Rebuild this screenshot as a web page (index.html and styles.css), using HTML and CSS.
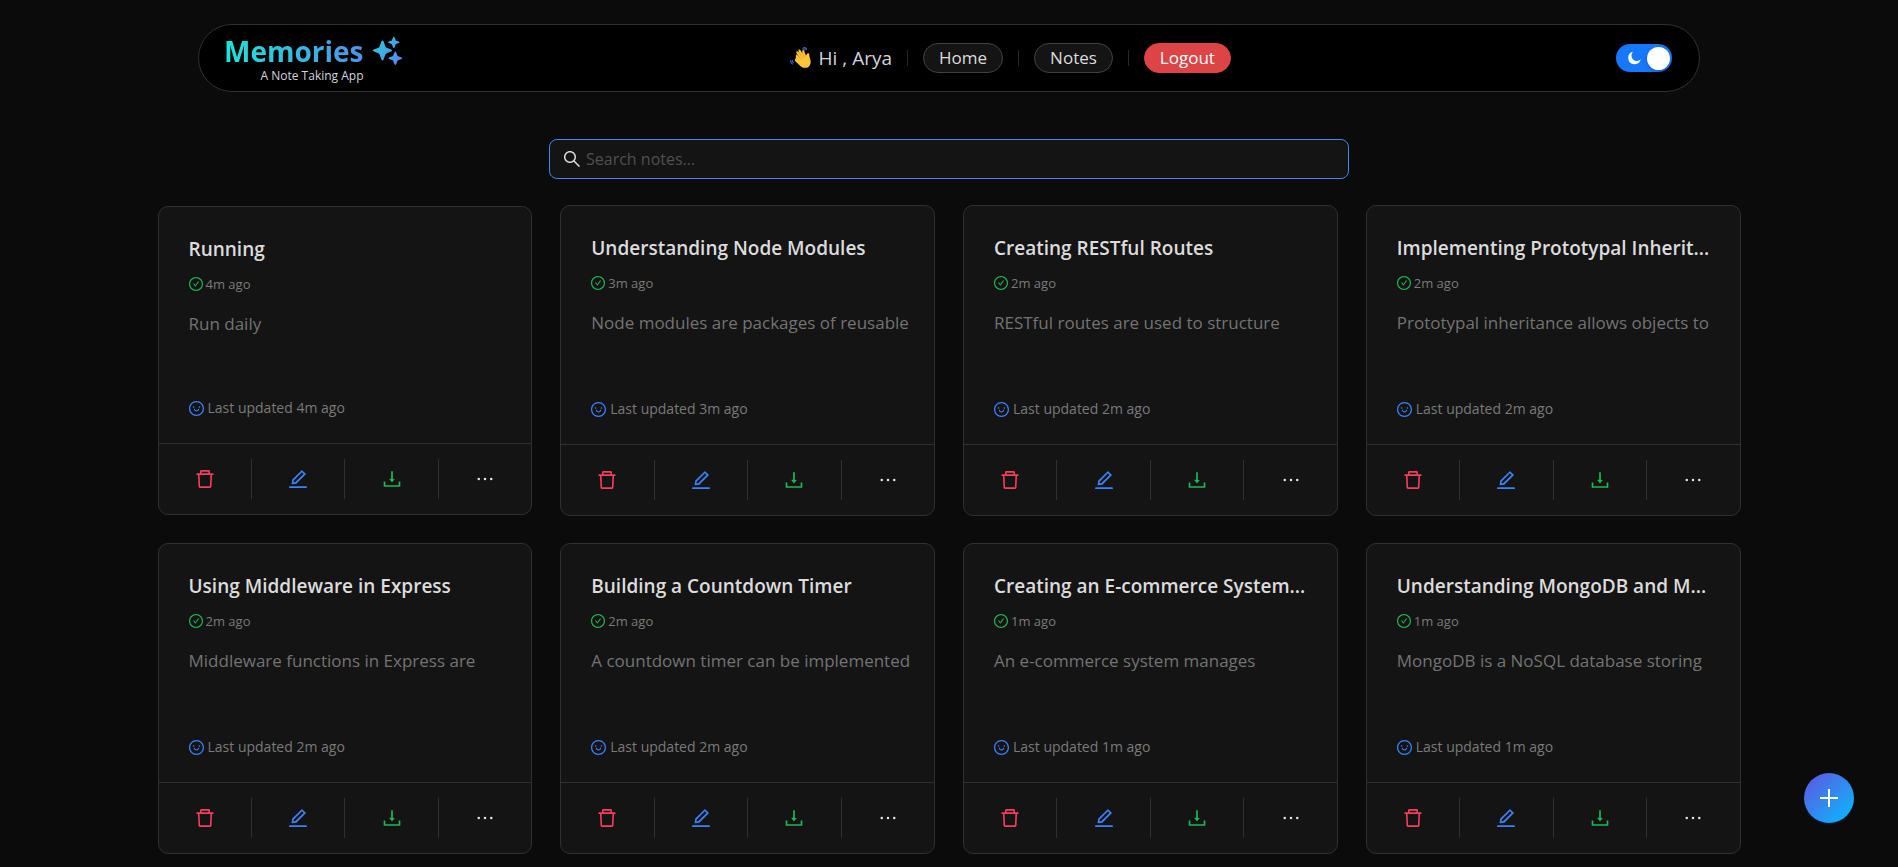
FILE: index.html
```
<!DOCTYPE html>
<html lang="en">
<head>
<meta charset="utf-8">
<meta name="viewport" content="width=device-width, initial-scale=1">
<title>Memories</title>
<link rel="stylesheet" href="styles.css">
</head>
<body>
<svg class="sprite" aria-hidden="true">
  <symbol id="i-trash" viewBox="64 64 896 896"><path d="M360 184h-8c4.400 0 8-3.600 8-8v8h304v-8c0 4.400 3.600 8 8 8h-8v72h72v-80c0-35.300-28.700-64-64-64H352c-35.300 0-64 28.700-64 64v80h72v-72zm504 72H160c-17.700 0-32 14.300-32 32v32c0 4.400 3.600 8 8 8h60.400l24.700 523c1.600 34.100 29.800 61 63.900 61h454c34.200 0 62.300-26.800 63.900-61l24.700-523H888c4.400 0 8-3.600 8-8v-32c0-17.700-14.300-32-32-32zM731.300 840H292.700l-24.200-512h487l-24.200 512z"/></symbol>
  <symbol id="i-edit" viewBox="64 64 896 896"><path d="M257.700 752c2 0 4-.2 6-.5L431.900 722c2-.4 3.900-1.300 5.300-2.800l423.900-423.900a9.960 9.960 0 000-14.100L694.900 114.900c-1.900-1.900-4.400-2.900-7.100-2.900s-5.200 1-7.100 2.900L256.800 538.800c-1.500 1.500-2.400 3.300-2.800 5.300l-29.500 168.200a33.500 33.500 0 009.400 29.800c6.600 6.400 14.900 9.900 23.800 9.900zm67.400-174.400L687.800 215l73.300 73.300-362.700 362.600-88.900 15.700 15.600-89zM880 836H144c-17.700 0-32 14.300-32 32v36c0 4.400 3.600 8 8 8h784c4.400 0 8-3.600 8-8v-36c0-17.700-14.300-32-32-32z"/></symbol>
  <symbol id="i-download" viewBox="64 64 896 896"><path d="M505.700 661a8 8 0 0012.600 0l112-141.700c4.100-5.200.4-12.900-6.300-12.900h-74.100V168c0-4.400-3.600-8-8-8h-60c-4.400 0-8 3.600-8 8v338.300H400c-6.700 0-10.400 7.700-6.300 12.900l112 141.800zM878 626h-60c-4.400 0-8 3.600-8 8v154H214V634c0-4.400-3.600-8-8-8h-60c-4.400 0-8 3.600-8 8v198c0 17.700 14.300 32 32 32h684c17.700 0 32-14.300 32-32V634c0-4.400-3.600-8-8-8z"/></symbol>
  <symbol id="i-more" viewBox="64 64 896 896"><path d="M176 511a56 56 0 10112 0 56 56 0 10-112 0zm280 0a56 56 0 10112 0 56 56 0 10-112 0zm280 0a56 56 0 10112 0 56 56 0 10-112 0z"/></symbol>
  <symbol id="i-check" viewBox="64 64 896 896"><path d="M699 353h-46.900c-10.200 0-19.900 4.900-25.900 13.300L469 584.300l-71.200-98.800c-6-8.300-15.600-13.300-25.900-13.300H325c-6.500 0-10.300 7.400-6.500 12.700l124.600 172.800a31.800 31.800 0 0051.700 0l210.600-292c3.900-5.300.1-12.700-6.400-12.700z"/><path d="M512 64C264.600 64 64 264.600 64 512s200.600 448 448 448 448-200.600 448-448S759.400 64 512 64zm0 820c-205.400 0-372-166.600-372-372s166.600-372 372-372 372 166.600 372 372-166.600 372-372 372z"/></symbol>
  <symbol id="i-smile" viewBox="64 64 896 896"><path d="M288 421a48 48 0 1096 0 48 48 0 10-96 0zm352 0a48 48 0 1096 0 48 48 0 10-96 0zM664 533h-48.100c-4.200 0-7.800 3.200-8.100 7.400C604 589.900 562.500 629 512 629s-92.100-39.100-95.800-88.600c-.3-4.200-3.900-7.400-8.100-7.400H360a8 8 0 00-8 8.400c4.400 84.300 74.500 151.600 160 151.600s155.600-67.300 160-151.600a8 8 0 00-8-8.400z"/><path d="M512 64C264.600 64 64 264.600 64 512s200.600 448 448 448 448-200.600 448-448S759.400 64 512 64zm0 820c-205.400 0-372-166.600-372-372s166.600-372 372-372 372 166.600 372 372-166.600 372-372 372z"/></symbol>
  <symbol id="i-search" viewBox="64 64 896 896"><path d="M909.600 854.500L649.900 594.800C690.200 542.700 712 479 712 412c0-80.200-31.300-155.400-87.900-212.100-56.600-56.700-132-87.900-212.100-87.900s-155.500 31.300-212.100 87.900C143.200 256.500 112 331.800 112 412c0 80.100 31.300 155.500 87.900 212.100C256.500 680.800 331.800 712 412 712c67 0 130.600-21.800 182.700-62l259.700 259.600a8.200 8.200 0 0011.600 0l43.600-43.500a8.200 8.200 0 000-11.600zM570.400 570.400C528 612.700 471.800 636 412 636s-116-23.300-158.400-65.600C211.300 528 188 471.800 188 412s23.300-116.100 65.600-158.400C296 211.300 352.200 188 412 188s116.100 23.200 158.400 65.600S636 352.200 636 412s-23.300 116.100-65.600 158.400z"/></symbol>
</svg>

<header class="topbar">
  <a class="brand" href="#">
    <span class="brand-text">
      <span class="brand-name">Memories</span>
      <span class="brand-tag">A Note Taking App</span>
    </span>
    <svg class="brand-icon" viewBox="0 0 34 32" aria-hidden="true">
      <defs>
        <linearGradient id="spark" x1="0" y1="4" x2="34" y2="30" gradientUnits="userSpaceOnUse">
          <stop offset="0" stop-color="#28cfdc"/><stop offset="1" stop-color="#5f7cec"/>
        </linearGradient>
      </defs>
      <g fill="url(#spark)">
        <path d="M11.500 4.500 Q12.300 4.500 12.700 5.800 L14.300 10.200 Q14.800 11.600 16.200 12.100 L20.600 13.800 Q22 14.500 20.600 15.200 L16.200 16.900 Q14.800 17.400 14.300 18.800 L12.700 23.200 Q12.300 24.500 11.500 24.500 Q10.700 24.500 10.300 23.200 L8.700 18.800 Q8.200 17.400 6.800 16.900 L2.400 15.200 Q1 14.500 2.400 13.800 L6.800 12.100 Q8.200 11.600 8.700 10.200 L10.300 5.800 Q10.700 4.500 11.500 4.500 Z"/>
        <path d="M22.800 .5 Q23.500 .5 24.700 4.400 Q28.600 5.600 28.600 6.300 Q28.600 7 24.700 8.200 Q23.500 12.100 22.800 12.100 Q22.100 12.100 20.900 8.200 Q17 7 17 6.300 Q17 5.600 20.900 4.400 Q22.100 .5 22.800 .5 Z"/>
        <path d="M24.300 15.500 Q25.100 15.500 26.600 20 Q31.100 21.500 31.100 22.300 Q31.100 23.100 26.600 24.600 Q25.100 29.100 24.300 29.100 Q23.500 29.100 22 24.600 Q17.500 23.100 17.500 22.300 Q17.500 21.500 22 20 Q23.500 15.500 24.300 15.500 Z"/>
      </g>
    </svg>
  </a>

  <nav class="menu" aria-label="Main">
    <span class="greeting">
      <svg class="wave" viewBox="0 0 22 22" aria-hidden="true">
        <path d="M5.600 11.600 C6.300 10.800 5.400 8.600 6.100 8 C7 7.200 8 8.700 9 9.700 L6.400 5.900 C5.700 4.700 7.300 3.700 8.200 4.800 L9.300 6.200 L8.500 3.900 C8.200 2.600 9.800 2 10.500 3.200 L12.300 6.200 L12.200 4 C12.200 2.900 13.800 2.700 14.200 3.900 L15.900 8.600 L17 6.900 C17.700 5.700 19.500 6.200 19.300 7.700 C18.900 9.600 20.900 12.400 20.700 15.400 C20.500 18.500 18.500 20.600 15.900 20.800 C13.600 21.100 11.700 20.300 10.300 18.900 L5.400 14.300 C4.500 13.300 4.700 12.500 5.600 11.600 Z" fill="#fcc33c"/>
        <path d="M6.700 7.300 L11.300 12.400 M9.300 6.200 L13.100 11.300 M12.300 6.200 L14.900 10.500" stroke="#d99a22" stroke-width=".7" fill="none"/>
        <path d="M12.200 1.900 Q14.300 1.300 15.400 3.500 M13.300 .5 Q16 .3 16.800 2.700 M3.900 15.800 Q2 15.200 2.200 13 M2.800 17.200 Q.2 16.300 .7 13.300" stroke="#356fc4" stroke-width="1.200" fill="none"/>
      </svg>
      Hi , Arya
    </span>
    <span class="rule"></span>
    <button class="pill" type="button">Home</button>
    <span class="rule"></span>
    <button class="pill" type="button">Notes</button>
    <span class="rule"></span>
    <button class="pill pill-danger" type="button">Logout</button>
  </nav>

  <label class="theme">
    <input class="theme-input" type="checkbox" role="switch" aria-label="Dark mode" checked>
    <svg class="theme-moon" viewBox="0 0 14 14" aria-hidden="true"><path d="M5.400 .3 A6.800 6.800 0 1 0 13.700 8.400 A5.300 5.300 0 0 1 5.400 .3 Z"/></svg>
  </label>
</header>

<main class="page">
  <label class="search">
    <svg class="search-icon" aria-hidden="true"><use href="#i-search"/></svg>
    <input class="search-input" type="search" placeholder="Search notes..." aria-label="Search notes">
  </label>

  <section class="notes" id="notes" aria-label="Notes"></section>
</main>

<button class="fab" type="button" aria-label="Add note">
  <svg class="fab-icon" viewBox="0 0 20 20" aria-hidden="true"><path d="M10 1v18M1 10h18"/></svg>
</button>
<script src="notes.js"></script>
</body>
</html>
```
FILE: notes.js
```
const notes = [
  { title: "Running", text: "Run daily", age: "4m", pressed: true },
  { title: "Understanding Node Modules", text: "Node modules are packages of reusable", age: "3m" },
  { title: "Creating RESTful Routes", text: "RESTful routes are used to structure", age: "2m" },
  { title: "Implementing Prototypal Inherit...", text: "Prototypal inheritance allows objects to", age: "2m" },
  { title: "Using Middleware in Express", text: "Middleware functions in Express are", age: "2m" },
  { title: "Building a Countdown Timer", text: "A countdown timer can be implemented", age: "2m" },
  { title: "Creating an E-commerce System...", text: "An e-commerce system manages", age: "1m" },
  { title: "Understanding MongoDB and M...", text: "MongoDB is a NoSQL database storing", age: "1m" },
];

const actions = [
  { name: "Delete", icon: "i-trash", cls: "act-delete" },
  { name: "Edit", icon: "i-edit", cls: "act-edit" },
  { name: "Download", icon: "i-download", cls: "act-save" },
  { name: "More", icon: "i-more", cls: "act-more" },
];

const actionItem = (a) => `
  <li class="action">
    <button class="act ${a.cls}" type="button" aria-label="${a.name}">
      <svg class="act-icon" aria-hidden="true"><use href="#${a.icon}"/></svg>
    </button>
  </li>`;

const card = (n) => `
  <article class="card${n.pressed ? " card-pressed" : ""}">
    <div class="card-body">
      <h2 class="card-title">${n.title}</h2>
      <p class="created"><svg class="created-icon" aria-hidden="true"><use href="#i-check"/></svg>${n.age} ago</p>
      <p class="excerpt">${n.text}</p>
      <p class="updated"><svg class="updated-icon" aria-hidden="true"><use href="#i-smile"/></svg>Last updated ${n.age} ago</p>
    </div>
    <ul class="actions">${actions.map(actionItem).join("")}</ul>
  </article>`;

document.getElementById("notes").innerHTML = notes.map(card).join("");
```
FILE: styles.css
```
* {
  box-sizing: border-box;
}

body {
  margin: 0;
  min-height: 100vh;
  background: #0b0b0b;
  color: #dcdcdc;
  font-family: "Open Sans", "Noto Sans", sans-serif;
}

button,
input {
  font-family: inherit;
}

.sprite {
  display: none;
}

/* Header */
.topbar {
  display: flex;
  align-items: center;
  justify-content: space-between;
  width: calc(100% - 48px);
  max-width: 1502px;
  height: 68px;
  margin: 24px auto 0;
  padding: 0 27px 0 25px;
  border: 1px solid #303030;
  border-radius: 34px;
  background: #000;
}

.brand {
  display: flex;
  gap: 7px;
  padding-top: 2px;
  text-decoration: none;
}

.brand-text {
  display: flex;
  flex-direction: column;
}

.brand-name {
  font-size: 28px;
  font-weight: 700;
  line-height: 34px;
  background: linear-gradient(90deg, #1be6d8, #5290e8);
  background-clip: text;
  -webkit-background-clip: text;
  color: transparent;
}

.brand-tag {
  font-size: 12px;
  line-height: 16px;
  text-align: right;
  color: #d1d5db;
}

.brand-icon {
  width: 34px;
  height: 32px;
  margin-top: 2px;
}

.menu {
  display: flex;
  align-items: center;
  gap: 15px;
}

.greeting {
  display: flex;
  align-items: center;
  gap: 7px;
  font-size: 19px;
  line-height: 28px;
  color: #d1d5db;
}

.wave {
  width: 22px;
  height: 22px;
}

.rule {
  width: 1px;
  height: 16px;
  background: #262626;
}

.pill {
  height: 30px;
  padding: 0 15px;
  border: 1px solid #424242;
  border-radius: 15px;
  background: #141414;
  color: #dcdcdc;
  font-size: 17px;
  line-height: 28px;
}

.pill-danger {
  border-color: #dc4446;
  background: #dc4446;
  color: #fff;
}

.theme {
  position: relative;
  display: flex;
}

.theme-input {
  appearance: none;
  display: flex;
  align-items: center;
  justify-content: flex-end;
  width: 56px;
  height: 28px;
  margin: 0;
  padding: 0 2px;
  border-radius: 14px;
  background: #1677ff;
}

.theme-input::before {
  content: "";
  width: 23px;
  height: 23px;
  border-radius: 50%;
  background: #fff;
  box-shadow: 0 2px 4px rgba(0, 35, 11, 0.2);
}

.theme-moon {
  position: absolute;
  left: 12px;
  top: 7px;
  width: 13px;
  height: 14px;
  fill: #fff;
  pointer-events: none;
}

/* Search */
.page {
  width: calc(100% - 48px);
  max-width: 1583px;
  margin: 47px auto 0;
  padding-bottom: 13px;
}

.search {
  display: flex;
  align-items: center;
  gap: 5px;
  max-width: 800px;
  height: 40px;
  margin: 0 auto 26px;
  padding: 0 13px;
  border: 1px solid #3c89e8;
  border-radius: 8px;
  background: #141414;
}

.search-icon {
  width: 18px;
  height: 18px;
  fill: #dcdcdc;
}

.search-input {
  flex: 1;
  min-width: 0;
  padding: 0;
  border: 0;
  outline: 0;
  background: transparent;
  color: #dcdcdc;
  font-size: 16px;
}

.search-input::placeholder {
  color: #4f4f4f;
}

/* Cards */
.notes {
  display: grid;
  grid-template-columns: repeat(4, minmax(0, 1fr));
  grid-auto-rows: minmax(311px, auto);
  gap: 27px 28px;
}

.card {
  display: flex;
  flex-direction: column;
  border: 1px solid #303030;
  border-radius: 10px;
  background: #141414;
}

.card-pressed {
  margin: 1px 0;
}

.card-body {
  flex: 1;
  display: flex;
  flex-direction: column;
  padding: 28px 30px 25px;
}

.card-title {
  margin: 0 0 11px;
  font-size: 19px;
  font-weight: 600;
  line-height: 28px;
  white-space: nowrap;
  color: #dcdcdc;
}

.created {
  display: flex;
  align-items: center;
  gap: 3px;
  margin: 0 0 16px;
  font-size: 13px;
  line-height: 20px;
  color: #7a7a7a;
}

.created-icon {
  width: 14px;
  height: 14px;
  fill: #22b455;
}

.excerpt {
  flex: 1;
  margin: 0;
  font-size: 17px;
  line-height: 28px;
  white-space: nowrap;
  color: #737373;
}

.updated {
  display: flex;
  align-items: center;
  gap: 4px;
  margin: 0;
  font-size: 14px;
  line-height: 20px;
  color: #7a7a7a;
}

.updated-icon {
  width: 15px;
  height: 15px;
  fill: #3b82f6;
}

.actions {
  display: flex;
  margin: 0;
  padding: 15px 0;
  border-top: 1px solid #303030;
  list-style: none;
}

.action {
  flex: 1;
  display: flex;
  height: 40px;
}

.action + .action {
  border-left: 1px solid #303030;
}

.act {
  flex: 1;
  display: flex;
  align-items: center;
  justify-content: center;
  padding: 0;
  border: 0;
  background: transparent;
}

.act-icon {
  width: 20px;
  height: 20px;
  fill: currentColor;
}

.act-delete {
  color: #f43f5e;
}

.act-edit {
  color: #3b82f6;
}

.act-save {
  color: #22b455;
}

.act-more {
  color: #e5e5e5;
}

/* Floating add button */
.fab {
  position: fixed;
  right: 44px;
  bottom: 44px;
  display: flex;
  align-items: center;
  justify-content: center;
  width: 50px;
  height: 50px;
  padding: 0;
  border: 0;
  border-radius: 50%;
  background: linear-gradient(135deg, #6253e1, #04befe);
  box-shadow: 0 2px 2px rgba(0, 60, 180, 0.2);
}

.fab-icon {
  width: 20px;
  height: 20px;
  fill: none;
  stroke: #fff;
  stroke-width: 2;
}
```
